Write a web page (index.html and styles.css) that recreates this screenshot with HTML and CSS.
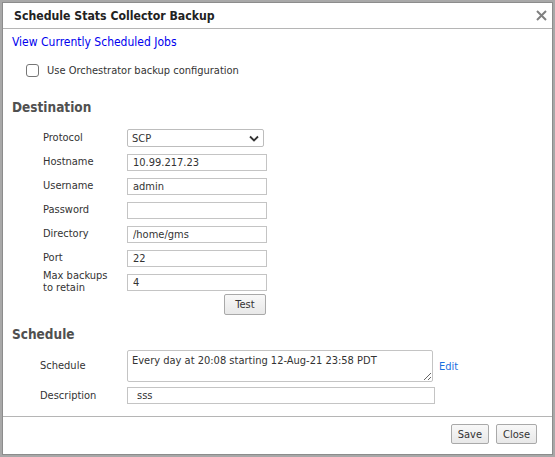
FILE: index.html
```html
<!DOCTYPE html>
<html lang="en">
<head>
  <meta charset="UTF-8">
  <title>Schedule Stats Collector Backup</title>
  <link rel="stylesheet" href="styles.css">
</head>
<body>

  <div class="dialog">
    <div class="titlebar">
      <span class="title">Schedule Stats Collector Backup</span>
      <span class="close">
        <svg width="11" height="11" viewBox="0 0 11 11"><path d="M1 1L10 10M10 1L1 10" stroke="#808080" stroke-width="2"/></svg>
      </span>
    </div>

    <div class="content">
      <a class="jobs-link" href="#">View Currently Scheduled Jobs</a>

      <label class="orch"><input type="checkbox" class="check"> Use Orchestrator backup configuration</label>

      <h3 class="section">Destination</h3>
      <div class="form dest">
        <label>Protocol</label>
        <div class="select-wrap">
          <select>
            <option>SCP</option>
            <option>FTP</option>
            <option>SFTP</option>
          </select>
          <svg class="chevron" width="10" height="7" viewBox="0 0 10 7"><path d="M1 1.5L5 5.5L9 1.5" fill="none" stroke="#333" stroke-width="1.8"/></svg>
        </div>

        <label>Hostname</label>
        <input type="text" value="10.99.217.23">

        <label>Username</label>
        <input type="text" value="admin">

        <label>Password</label>
        <input type="password">

        <label>Directory</label>
        <input type="text" value="/home/gms">

        <label>Port</label>
        <input type="text" value="22">

        <label class="two-line">Max backups<br>to retain</label>
        <input type="text" value="4">

        <span></span>
        <div class="test-row"><button class="btn test">Test</button></div>
      </div>

      <h3 class="section sched-head">Schedule</h3>
      <div class="form sched">
        <label>Schedule</label>
        <textarea readonly>Every day at 20:08 starting 12-Aug-21 23:58 PDT</textarea>
        <a class="edit" href="#">Edit</a>

        <label>Description</label>
        <input type="text" class="desc" value="sss">
        <span></span>
      </div>
    </div>

    <div class="footer">
      <button class="btn">Save</button>
      <button class="btn">Close</button>
    </div>
  </div>

</body>
</html>
```

FILE: styles.css
```css
body { margin: 0; background: #a8a8a8; font-family: "DejaVu Sans Condensed", "Liberation Sans", sans-serif; font-size: 11px; color: #333; }

.dialog { margin: 2px 2px 0 2px; height: 453px; background: #fff; border: 1px solid #8c8c8c; display: flex; flex-direction: column; box-sizing: border-box; }

/* title bar */
.titlebar { flex-shrink: 0; height: 25px; display: flex; align-items: center; justify-content: space-between; padding: 0 3px 0 11px; border-bottom: 1px solid #b5b5b5; }
.title { font-weight: bold; font-size: 12.2px; color: #222; }
.close { display: flex; padding: 2px; }

.content { flex: 1; padding: 6px 9px 0 9px; }

.jobs-link { display: block; color: #0000ee; text-decoration: none; font-size: 12px; line-height: 14px; }

.orch { display: flex; align-items: center; gap: 8px; height: 14px; margin: 14px 0 0 14px; color: #333; }
.check { appearance: none; margin: 0; width: 13px; height: 13px; border: 1px solid #767676; border-radius: 3px; background: #fff; }

.section { margin: 22px 0 0 0; font-size: 13.5px; line-height: 16px; font-weight: bold; color: #505050; }
.sched-head { margin-top: 8px; }

/* label / field rows */
.form { display: grid; grid-template-columns: 84px 140px; grid-auto-rows: 24px; align-items: center; padding-left: 31px; }
.dest { margin-top: 11px; }
.form label { color: #333; line-height: 12px; }
.form input, .form textarea, .form select { font-family: inherit; font-size: 11px; color: #333; box-sizing: border-box; margin: 0; }
.form input { height: 17px; border: 1px solid #c4c4c4; padding: 0 5px; }

.select-wrap { position: relative; display: flex; }
.select-wrap select { appearance: none; width: 137px; height: 18px; border: 1px solid #bdbdbd; border-radius: 2px; background: #fff; padding: 0 4px; }
.chevron { position: absolute; right: 8px; top: 6px; pointer-events: none; }

.test-row { display: flex; justify-content: flex-end; padding-right: 1px; }

.btn { font-family: inherit; font-size: 11px; color: #333; background: linear-gradient(#f8f8f8, #e8e8e8); border: 1px solid #a9a9a9; border-radius: 2px; padding: 0 6px; height: 21px; }
.test { width: 42px; margin-top: -3px; }

.sched { grid-template-columns: 87px 308px auto; grid-auto-rows: auto; row-gap: 5px; margin-top: 8px; padding-left: 28px; }
.sched textarea { width: 306px; height: 32px; border: 1px solid #c4c4c4; border-radius: 2px; padding: 3px 4px; resize: both; line-height: 13px; }
.sched .desc { height: 17px; width: 308px; padding-left: 9px; }
.edit { color: #1a6fe0; text-decoration: none; padding-left: 4px; }

.footer { flex-shrink: 0; height: 38px; border-top: 1px solid #b5b5b5; display: flex; justify-content: flex-end; align-items: center; gap: 7px; padding: 0 15px 3px 0; box-sizing: border-box; }
.footer .btn { height: 20px; padding: 0 6px; }
```
